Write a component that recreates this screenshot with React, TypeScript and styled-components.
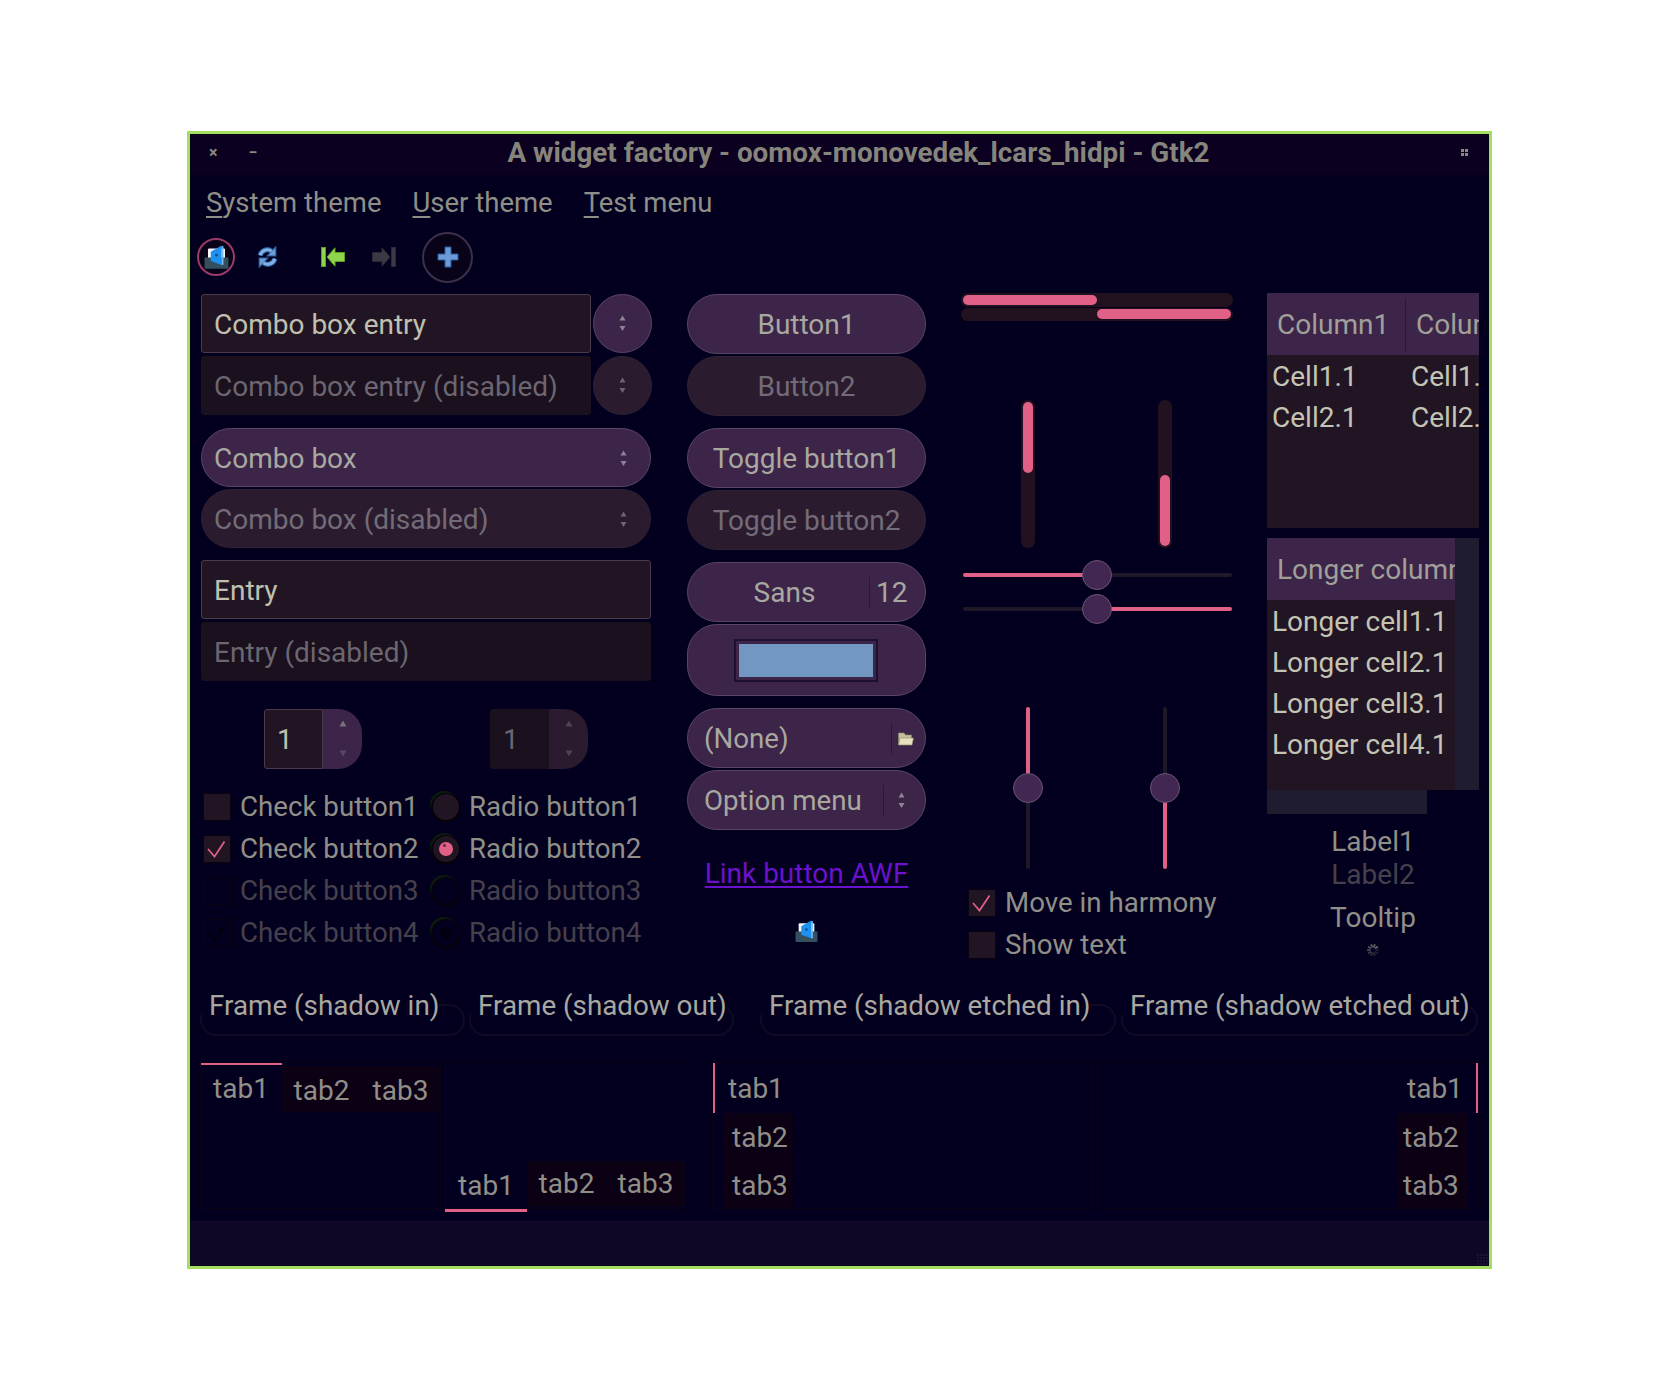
import React from 'react';
import styled, { createGlobalStyle, css } from 'styled-components';

const GlobalStyle = createGlobalStyle`
  html, body {
    margin: 0;
    background: #ffffff;
  }
  body {
    font-family: Roboto, "Liberation Sans", sans-serif;
    font-size: 28px;
    color: #a8a8a0;
  }
  * {
    box-sizing: border-box;
  }
`;

const pink = '#e06088';
const buttonBg = '#3c2549';
const buttonBorder = '#5a4565';
const buttonOff = '#2a1c2e';
const entryBg = '#211524';
const entryOff = '#1a101e';

const Page = styled.div`
  padding: 131px 0 0 187px;
`;

const Window = styled.div`
  width: 1305px;
  height: 1138px;
  border: 3px solid #a4e060;
  background: #03001f;
  display: flex;
  flex-direction: column;
`;

const TitleBar = styled.div`
  height: 41px;
  flex: none;
  background: #0b0020;
  display: flex;
  align-items: center;
  padding: 0 20px 4px 0;
`;

const WindowControls = styled.div`
  width: 66px;
  flex: none;
  display: flex;
  padding-left: 19px;
  gap: 31px;
  color: #8a8a80;
  font-size: 16px;
  font-weight: 700;
`;

const Title = styled.div`
  flex: 1;
  text-align: center;
  font-weight: 700;
  font-size: 27.8px;
  color: #85857c;
  white-space: nowrap;
`;

const MenuBar = styled.div`
  height: 57px;
  flex: none;
  display: flex;
  align-items: center;
  padding: 0 0 2px 16px;
  gap: 31px;
  font-size: 27.5px;
  color: #8f8f87;
  u {
    text-underline-offset: 4px;
    text-decoration-thickness: 2px;
  }
`;

const ToolBar = styled.div`
  height: 50px;
  flex: none;
  display: flex;
  align-items: center;
  padding-left: 7px;
`;

const ToolCircle = styled.div<{ $size: number; $ring: string; $ml?: number }>`
  width: ${p => p.$size}px;
  height: ${p => p.$size}px;
  margin-left: ${p => p.$ml ?? 0}px;
  border-radius: 50%;
  border: 2px solid ${p => p.$ring};
  background: #080318;
  display: flex;
  align-items: center;
  justify-content: center;
`;

const ToolIcon = styled.div<{ $ml: number }>`
  margin-left: ${p => p.$ml}px;
  display: flex;
`;

const Columns = styled.div`
  display: flex;
  flex: none;
  height: 706px;
  padding: 12px 0 0 11px;
`;

const Column = styled.div<{ $width: number; $ml?: number; $mt?: number }>`
  width: ${p => p.$width}px;
  margin-left: ${p => p.$ml ?? 0}px;
  margin-top: ${p => p.$mt ?? 0}px;
  flex: none;
  display: flex;
  flex-direction: column;
  & > * {
    flex: none;
  }
`;

const ComboRow = styled.div<{ $mt?: number }>`
  display: flex;
  gap: 2px;
  margin-top: ${p => p.$mt ?? 0}px;
`;

const EntryBox = styled.div<{ $off?: boolean; $mt?: number; $width?: number }>`
  height: 59px;
  width: ${p => (p.$width ? `${p.$width}px` : '100%')};
  margin-top: ${p => p.$mt ?? 0}px;
  flex: none;
  display: flex;
  align-items: center;
  padding: 2px 0 0 12px;
  border-radius: 3px;
  border: 1px solid ${p => (p.$off ? entryOff : '#4a3a4c')};
  background: ${p => (p.$off ? entryOff : entryBg)};
  color: ${p => (p.$off ? '#6c6670' : '#c0c0b0')};
`;

const pill = css<{ $off?: boolean }>`
  height: 59px;
  border-radius: 30px;
  border: 1px solid ${p => (p.$off ? '#2f2233' : buttonBorder)};
  background: ${p => (p.$off ? buttonOff : buttonBg)};
  color: ${p => (p.$off ? '#736c78' : '#a8a8a0')};
  display: flex;
  align-items: center;
`;

const RoundButton = styled.div<{ $off?: boolean }>`
  ${pill}
  width: 59px;
  flex: none;
  justify-content: center;
`;

const ComboBox = styled.div<{ $off?: boolean; $mt?: number }>`
  ${pill}
  margin-top: ${p => p.$mt ?? 0}px;
  justify-content: space-between;
  padding: 2px 23px 0 12px;
`;

const SpinRow = styled.div`
  display: flex;
  gap: 128px;
  margin-top: 28px;
  padding-left: 63px;
`;

const Spin = styled.div<{ $off?: boolean }>`
  width: 98px;
  height: 60px;
  display: flex;
  color: ${p => (p.$off ? '#6c6670' : '#c0c0b0')};
`;

const SpinValue = styled.div<{ $off?: boolean }>`
  width: 59px;
  display: flex;
  align-items: center;
  padding-left: 12px;
  border-radius: 3px 0 0 3px;
  border: 1px solid ${p => (p.$off ? entryOff : '#4a3a4c')};
  background: ${p => (p.$off ? entryOff : entryBg)};
`;

const SpinButtons = styled.div<{ $off?: boolean }>`
  width: 39px;
  display: flex;
  flex-direction: column;
  align-items: center;
  justify-content: space-between;
  padding: 11px 0 12px;
  border-radius: 0 24px 24px 0;
  background: ${p => (p.$off ? buttonOff : buttonBg)};
`;

const ToggleGrid = styled.div`
  display: grid;
  grid-template-columns: 227px 1fr;
  grid-auto-rows: 27px;
  row-gap: 15px;
  margin-top: 24px;
  padding-left: 2px;
`;

const ToggleRow = styled.div<{ $off?: boolean; $mt?: number; $pl?: number }>`
  display: flex;
  align-items: center;
  height: 27px;
  line-height: 1;
  font-size: 27.7px;
  white-space: nowrap;
  margin-top: ${p => p.$mt ?? 0}px;
  padding-left: ${p => p.$pl ?? 0}px;
  color: ${p => (p.$off ? '#46404c' : '#908f88')};
`;

const CheckBox = styled.div<{ $off?: boolean }>`
  width: 28px;
  height: 28px;
  flex: none;
  margin-right: 9px;
  border: 1px solid #0a0410;
  background: ${p => (p.$off ? 'transparent' : entryBg)};
  display: flex;
`;

const RadioDot = styled.div<{ $off?: boolean }>`
  width: 26px;
  height: 26px;
  flex: none;
  margin-right: 10px;
  border-radius: 50%;
  background: ${p => (p.$off ? 'transparent' : entryBg)};
  box-shadow: 0 1px 0 2px #06020c, -2px -2px 0 1px #0b1a0e;
  display: flex;
  align-items: center;
  justify-content: center;
`;

const RadioMark = styled.div<{ $off?: boolean }>`
  width: ${p => (p.$off ? 12 : 14)}px;
  height: ${p => (p.$off ? 12 : 14)}px;
  border-radius: 50%;
  background: ${p => (p.$off ? '#020010' : pink)};
  position: relative;
  &::after {
    content: '';
    position: absolute;
    left: 4px;
    top: 2px;
    width: 3px;
    height: 3px;
    border-radius: 50%;
    background: ${p => (p.$off ? 'transparent' : '#5a2a48')};
  }
`;

const PushButton = styled.div<{ $off?: boolean; $mt?: number; $h?: number }>`
  ${pill}
  height: ${p => p.$h ?? 60}px;
  margin-top: ${p => p.$mt ?? 0}px;
  justify-content: center;
  padding-top: 1px;
`;

const FontName = styled.div`
  flex: 1;
  text-align: center;
  padding-left: 12px;
`;

const Divider = styled.div<{ $color?: string; $h?: number }>`
  width: 1px;
  height: ${p => p.$h ?? 31}px;
  flex: none;
  background: ${p => p.$color ?? '#2a1834'};
`;

const FontSize = styled.div`
  width: 55px;
  padding-left: 6px;
`;

const ColorSwatch = styled.div`
  width: 144px;
  height: 43px;
  margin-right: 2px;
  border: 2px solid #1e1030;
  padding: 3px;
  display: flex;
`;

const ColorFill = styled.div`
  flex: 1;
  background: #7297c0;
`;

const PickerButton = styled(PushButton)`
  justify-content: flex-start;
  padding-left: 16px;
`;

const PickerLabel = styled.div`
  flex: 1;
  font-size: 27.7px;
`;

const PickerEnd = styled.div<{ $width: number }>`
  width: ${p => p.$width}px;
  flex: none;
  display: flex;
  justify-content: center;
  padding-right: 6px;
`;

const LinkButton = styled.a`
  margin-top: 27px;
  height: 34px;
  line-height: 34px;
  text-align: center;
  color: #6a12cc;
  text-decoration: underline;
  text-underline-offset: 3px;
  text-decoration-thickness: 2px;
`;

const CenteredIcon = styled.div`
  margin-top: 29px;
  display: flex;
  justify-content: center;
`;

const ProgressH = styled.div<{ $end?: boolean; $mt?: number }>`
  height: ${p => (p.$end ? 13 : 14)}px;
  margin-top: ${p => p.$mt ?? 0}px;
  padding: ${p => (p.$end ? '1px 2px 2px' : '2px')};
  border-radius: 7px;
  background: #22121f;
  display: flex;
  justify-content: ${p => (p.$end ? 'flex-end' : 'flex-start')};
`;

const ProgressFillH = styled.div<{ $value: number }>`
  width: ${p => p.$value}%;
  height: 100%;
  border-radius: 5px;
  background: ${pink};
`;

const VBarRow = styled.div`
  display: flex;
  gap: 123px;
  margin-top: 79px;
  padding-left: 60px;
`;

const ProgressV = styled.div<{ $end?: boolean }>`
  width: 14px;
  height: 148px;
  padding: 2px;
  border-radius: 7px;
  background: #22121f;
  display: flex;
  flex-direction: column;
  justify-content: ${p => (p.$end ? 'flex-end' : 'flex-start')};
`;

const ProgressFillV = styled.div<{ $value: number }>`
  height: ${p => p.$value}%;
  border-radius: 5px;
  background: ${pink};
`;

const ScaleH = styled.div<{ $mt: number }>`
  height: 30px;
  margin-top: ${p => p.$mt}px;
  padding: 0 1px 0 2px;
  position: relative;
  display: flex;
  align-items: center;
`;

const Track = styled.div<{ $on?: boolean; $vertical?: boolean }>`
  background: ${p => (p.$on ? pink : '#1e1828')};
  border-radius: 2px;
  ${p => (p.$vertical ? 'width: 4px;' : 'height: 4px;')}
  flex: 1;
`;

const Thumb = styled.div`
  position: absolute;
  width: 30px;
  height: 30px;
  border-radius: 50%;
  background: #432753;
  border: 1px solid #6a5570;
  left: 121px;
  top: 0;
`;

const VScaleRow = styled.div`
  display: flex;
  gap: 107px;
  margin-top: 83px;
  padding-left: 52px;
`;

const ScaleV = styled.div`
  width: 30px;
  height: 162px;
  position: relative;
  display: flex;
  flex-direction: column;
  align-items: center;
`;

const VThumb = styled(Thumb)`
  left: 0;
  top: 66px;
`;

const Tree = styled.div`
  height: 235px;
  background: ${entryBg};
  overflow: hidden;
`;

const TreeHeader = styled.div`
  height: 62px;
  padding-top: 1px;
  background: ${buttonBg};
  color: #a0a09a;
  display: flex;
  align-items: center;
  white-space: nowrap;
  overflow: hidden;
`;

const HeaderCell = styled.div<{ $width: number }>`
  width: ${p => p.$width}px;
  flex: none;
  padding-left: 10px;
`;

const TreeRow = styled.div`
  height: 41px;
  display: flex;
  align-items: center;
  color: #c4c4b4;
  white-space: nowrap;
`;

const TreeCell = styled.div<{ $width: number }>`
  width: ${p => p.$width}px;
  flex: none;
  padding-left: 5px;
`;

const TreeRows = styled.div`
  padding-top: 1px;
`;

const ScrolledTree = styled.div`
  margin-top: 10px;
  display: grid;
  grid-template-columns: 188px 24px;
  grid-template-rows: 252px 24px;
`;

const ScrolledBody = styled.div`
  background: ${entryBg};
  overflow: hidden;
`;

const VScroll = styled.div`
  background: #201c30;
`;

const HScroll = styled.div`
  width: 160px;
  background: #201c30;
`;

const Caption = styled.div<{ $mt?: number; $off?: boolean }>`
  height: 32px;
  line-height: 32px;
  margin-top: ${p => p.$mt ?? 0}px;
  text-align: center;
  color: ${p => (p.$off ? '#46404c' : '#908f88')};
`;

const SpinnerWrap = styled.div`
  margin-top: 9px;
  display: flex;
  justify-content: center;
`;

const FrameRow = styled.div`
  display: flex;
  padding-left: 10px;
`;

const Frame = styled.fieldset<{ $width: number; $ml?: number }>`
  width: ${p => p.$width}px;
  height: 48px;
  margin: 0 0 0 ${p => p.$ml ?? 0}px;
  padding: 0;
  min-width: 0;
  border: 2px solid #100a22;
  border-radius: 20px;
`;

const FrameLabel = styled.legend`
  padding: 2px 0 0 7px;
  margin: 0;
  font-size: 27.8px;
  color: #a8a8a0;
  line-height: 32px;
  white-space: nowrap;
`;

const NotebookRow = styled.div`
  display: flex;
  padding-left: 10px;
  margin-top: 26px;
`;

const Notebook = styled.div<{ $width: number; $ml?: number; $dir: 'column' | 'column-reverse' | 'row' | 'row-reverse' }>`
  width: ${p => p.$width}px;
  height: 147px;
  margin-left: ${p => p.$ml ?? 0}px;
  flex: none;
  display: flex;
  flex-direction: ${p => p.$dir};
  outline: 1px solid #0a0216;
  outline-offset: -1px;
`;

const TabStrip = styled.div<{ $bottom?: boolean }>`
  display: flex;
  align-items: flex-end;
  margin-bottom: ${p => (p.$bottom ? -3 : 0)}px;
`;

const TabGroup = styled.div<{ $bottom?: boolean }>`
  display: flex;
  height: 46px;
  background: #0c0014;
  align-items: center;
  margin-bottom: ${p => (p.$bottom ? 5 : 0)}px;
  padding: ${p => (p.$bottom ? '0 0 2px' : '3px 0 0')};
`;

const ActiveTab = styled.div<{ $bottom?: boolean }>`
  width: 82px;
  height: 50px;
  display: flex;
  align-items: center;
  justify-content: center;
  color: #908f88;
  ${p => (p.$bottom ? `border-bottom: 3px solid ${pink};` : `border-top: 3px solid ${pink};`)}
`;

const Tab = styled.div`
  width: 79px;
  text-align: center;
  color: #908f88;
`;

const SideStrip = styled.div<{ $right?: boolean }>`
  display: flex;
  flex-direction: column;
  flex: none;
  width: 81px;
  align-items: ${p => (p.$right ? 'flex-start' : 'flex-end')};
`;

const SideActive = styled.div<{ $right?: boolean }>`
  width: 100%;
  height: 51px;
  display: flex;
  align-items: center;
  padding-top: 2px;
  color: #908f88;
  ${p =>
    p.$right
      ? `border-right: 3px solid ${pink}; padding-left: 9px;`
      : `border-left: 3px solid ${pink}; padding-left: 13px;`}
`;

const SideGroup = styled.div<{ $right?: boolean }>`
  flex: 1;
  width: 70px;
  background: #0c0014;
  display: flex;
  flex-direction: column;
  color: #908f88;
  padding-left: ${p => (p.$right ? 5 : 9)}px;
`;

const SideTab = styled.div`
  height: 48px;
  display: flex;
  align-items: center;
`;

const StatusBar = styled.div`
  margin-top: auto;
  height: 45px;
  flex: none;
  background: #0e0826;
  border-top: 1px solid #150b28;
  display: flex;
  justify-content: flex-end;
  align-items: flex-end;
`;

// drawings

const UpDown = ({ color = '#8a8590' }: { color?: string }) => (
  <svg width="7" height="17" viewBox="0 0 7 17">
    <path d="M3.5 0.5 L6.5 5.5 H0.5 Z" fill={color} />
    <path d="M3.5 16 L6.5 11 H0.5 Z" fill={color} />
  </svg>
);

const SmallArrow = ({ down, color }: { down?: boolean; color: string }) => (
  <svg width="8" height="7" viewBox="0 0 8 7">
    <path d={down ? 'M4 6.5 L7.5 0.5 H0.5 Z' : 'M4 0.5 L7.5 6.5 H0.5 Z'} fill={color} />
  </svg>
);

const CheckMark = ({ color }: { color: string }) => (
  <svg width="26" height="26" viewBox="0 0 26 26">
    <path d="M4 13 L10.5 20.5 L20.5 5.5" fill="none" stroke={color} strokeWidth="1.7" />
  </svg>
);

const AppIcon = ({ size = 23 }: { size?: number }) => (
  <svg width={size} height={size} viewBox="0 0 22 22">
    <rect x="3.5" y="3" width="15" height="12" rx="1" fill="#f4f6f8" />
    <path d="M0.5 11 H21.5 V20 Q21.5 21 20.5 21 H1.5 Q0.5 21 0.5 20 Z" fill="#34505f" />
    <path d="M6 6 L15.5 0.5 V17.5 L6 14 Z" fill="#1e90f0" />
    <rect x="15.5" y="1" width="1.6" height="16.5" fill="#7abcf0" />
    <circle cx="11" cy="9" r="1.2" fill="#12508a" />
  </svg>
);

const RefreshIcon = () => (
  <svg width="21" height="22" viewBox="0 0 20 21">
    <path d="M3 9 A7 7 0 0 1 14 5" fill="none" stroke="#2a5a98" strokeWidth="5" />
    <path d="M18 0.5 V9.5 H9.5 Z" fill="#6c9ed8" stroke="#2a5a98" strokeWidth="1" />
    <path d="M3 9 A7 7 0 0 1 14 5" fill="none" stroke="#7fb0e6" strokeWidth="3" />
    <path d="M17 12 A7 7 0 0 1 6 16" fill="none" stroke="#2a5a98" strokeWidth="5" />
    <path d="M2 20.5 V11.5 H10.5 Z" fill="#6c9ed8" stroke="#2a5a98" strokeWidth="1" />
    <path d="M17 12 A7 7 0 0 1 6 16" fill="none" stroke="#7fb0e6" strokeWidth="3" />
  </svg>
);

const JumpIcon = ({ fill, stroke, flip }: { fill: string; stroke: string; flip?: boolean }) => (
  <svg width="24" height="20" viewBox="0 0 24 20" style={flip ? { transform: 'scaleX(-1)' } : undefined}>
    <rect x="0.5" y="0.5" width="4" height="19" fill={fill} stroke={stroke} />
    <path d="M6 10 L14 0.8 V5.5 H23.5 V14.5 H14 V19.2 Z" fill={fill} stroke={stroke} />
  </svg>
);

const PlusIcon = () => (
  <svg width="22" height="22" viewBox="0 0 22 22">
    <path
      d="M8 1 H14 V8 H21 V14 H14 V21 H8 V14 H1 V8 H8 Z"
      fill="#6a9bd8"
      stroke="#2a5a9a"
      strokeWidth="1"
    />
  </svg>
);

const FolderIcon = () => (
  <svg width="16" height="14" viewBox="0 0 16 14">
    <path d="M0.5 1 H6 L7.5 3 H13.5 V12.5 H0.5 Z" fill="#c4c09c" stroke="#8a8668" strokeWidth="0.6" />
    <path d="M2 6 H15.5 L14 13 H0.5 Z" fill="#e6e2c0" stroke="#8a8668" strokeWidth="0.6" />
  </svg>
);

const Dots = ({ color, step, rows }: { color: string; step: number; rows: number }) => (
  <svg width={step * rows} height={step * rows} viewBox={`0 0 ${step * rows} ${step * rows}`}>
    {Array.from({ length: rows * rows }, (_, i) => (
      <rect
        key={i}
        x={(i % rows) * step}
        y={Math.floor(i / rows) * step}
        width={step - 1}
        height={step - 1}
        fill={color}
      />
    ))}
  </svg>
);

const SpinnerIcon = () => (
  <svg width="14" height="14" viewBox="0 0 14 14">
    {Array.from({ length: 10 }, (_, i) => {
      const a = (i / 10) * Math.PI * 2;
      return (
        <line
          key={i}
          x1={7 + Math.cos(a) * 2.5}
          y1={7 + Math.sin(a) * 2.5}
          x2={7 + Math.cos(a) * 6}
          y2={7 + Math.sin(a) * 6}
          stroke="#6c6a6c"
          strokeOpacity={0.2 + (i / 10) * 0.8}
          strokeWidth="2"
        />
      );
    })}
  </svg>
);

const checks = [
  { check: 'Check button1', radio: 'Radio button1' },
  { check: 'Check button2', radio: 'Radio button2', on: true },
  { check: 'Check button3', radio: 'Radio button3', off: true },
  { check: 'Check button4', radio: 'Radio button4', on: true, off: true },
];

const frames = [
  { label: 'Frame (shadow in)', width: 265, ml: 0 },
  { label: 'Frame (shadow out)', width: 265, ml: 4 },
  { label: 'Frame (shadow etched in)', width: 356, ml: 26 },
  { label: 'Frame (shadow etched out)', width: 357, ml: 5 },
];

const App: React.FC = () => {
  return (
    <Page>
      <GlobalStyle />
      <Window>
        <TitleBar>
          <WindowControls>
            <span>×</span>
            <span>−</span>
          </WindowControls>
          <Title>A widget factory - oomox-monovedek_lcars_hidpi - Gtk2</Title>
          <Dots color="#8a8a80" step={4} rows={2} />
        </TitleBar>

        <MenuBar>
          <span><u>S</u>ystem theme</span>
          <span><u>U</u>ser theme</span>
          <span><u>T</u>est menu</span>
        </MenuBar>

        <ToolBar>
          <ToolCircle $size={38} $ring="#9a3a66"><AppIcon size={25} /></ToolCircle>
          <ToolIcon $ml={22}><RefreshIcon /></ToolIcon>
          <ToolIcon $ml={43}><JumpIcon fill="#8fd44a" stroke="#5ea01e" /></ToolIcon>
          <ToolIcon $ml={27}><JumpIcon fill="#3c3844" stroke="#2c2834" flip /></ToolIcon>
          <ToolCircle $size={51} $ring="#3c2f48" $ml={26}><PlusIcon /></ToolCircle>
        </ToolBar>

        <Columns>
          <Column $width={450}>
            <ComboRow>
              <EntryBox $width={390}>Combo box entry</EntryBox>
              <RoundButton><UpDown /></RoundButton>
            </ComboRow>
            <ComboRow $mt={3}>
              <EntryBox $width={390} $off>Combo box entry (disabled)</EntryBox>
              <RoundButton $off><UpDown color="#6c6670" /></RoundButton>
            </ComboRow>
            <ComboBox $mt={13}>Combo box<UpDown /></ComboBox>
            <ComboBox $off $mt={2}>Combo box (disabled)<UpDown color="#6c6670" /></ComboBox>
            <EntryBox $mt={12}>Entry</EntryBox>
            <EntryBox $off $mt={3}>Entry (disabled)</EntryBox>
            <SpinRow>
              <Spin>
                <SpinValue>1</SpinValue>
                <SpinButtons>
                  <SmallArrow color="#7a7078" />
                  <SmallArrow down color="#564a60" />
                </SpinButtons>
              </Spin>
              <Spin $off>
                <SpinValue $off>1</SpinValue>
                <SpinButtons $off>
                  <SmallArrow color="#4c4450" />
                  <SmallArrow down color="#4c4450" />
                </SpinButtons>
              </Spin>
            </SpinRow>
            <ToggleGrid>
              {checks.map(row => (
                <React.Fragment key={row.check}>
                  <ToggleRow $off={row.off}>
                    <CheckBox $off={row.off}>
                      {row.on && <CheckMark color={row.off ? '#000008' : pink} />}
                    </CheckBox>
                    {row.check}
                  </ToggleRow>
                  <ToggleRow $off={row.off} $pl={3}>
                    <RadioDot $off={row.off}>
                      {row.on && <RadioMark $off={row.off} />}
                    </RadioDot>
                    {row.radio}
                  </ToggleRow>
                </React.Fragment>
              ))}
            </ToggleGrid>
          </Column>

          <Column $width={239} $ml={36}>
            <PushButton>Button1</PushButton>
            <PushButton $off $mt={2}>Button2</PushButton>
            <PushButton $mt={12}>Toggle button1</PushButton>
            <PushButton $off $mt={2}>Toggle button2</PushButton>
            <PushButton $mt={12}>
              <FontName>Sans</FontName>
              <Divider />
              <FontSize>12</FontSize>
            </PushButton>
            <PushButton $mt={2} $h={72}>
              <ColorSwatch><ColorFill /></ColorSwatch>
            </PushButton>
            <PickerButton $mt={12}>
              <PickerLabel>(None)</PickerLabel>
              <Divider />
              <PickerEnd $width={33}><FolderIcon /></PickerEnd>
            </PickerButton>
            <PickerButton $mt={2}>
              <PickerLabel>Option menu</PickerLabel>
              <Divider />
              <PickerEnd $width={41}><UpDown /></PickerEnd>
            </PickerButton>
            <LinkButton>Link button AWF</LinkButton>
            <CenteredIcon><AppIcon /></CenteredIcon>
          </Column>

          <Column $width={272} $ml={35} $mt={-1}>
            <ProgressH><ProgressFillH $value={50} /></ProgressH>
            <ProgressH $end $mt={1}><ProgressFillH $value={50} /></ProgressH>
            <VBarRow>
              <ProgressV><ProgressFillV $value={49} /></ProgressV>
              <ProgressV $end><ProgressFillV $value={49} /></ProgressV>
            </VBarRow>
            <ScaleH $mt={12}>
              <Track $on />
              <Track />
              <Thumb />
            </ScaleH>
            <ScaleH $mt={4}>
              <Track />
              <Track $on />
              <Thumb />
            </ScaleH>
            <VScaleRow>
              <ScaleV>
                <Track $vertical $on />
                <Track $vertical />
                <VThumb />
              </ScaleV>
              <ScaleV>
                <Track $vertical />
                <Track $vertical $on />
                <VThumb />
              </ScaleV>
            </VScaleRow>
            <ToggleRow $mt={20} $pl={7}>
              <CheckBox><CheckMark color={pink} /></CheckBox>
              Move in harmony
            </ToggleRow>
            <ToggleRow $mt={15} $pl={7}>
              <CheckBox />
              Show text
            </ToggleRow>
          </Column>

          <Column $width={212} $ml={34} $mt={-1}>
            <Tree>
              <TreeHeader>
                <HeaderCell $width={138}>Column1</HeaderCell>
                <Divider $h={54} />
                <HeaderCell $width={73}>Column2</HeaderCell>
              </TreeHeader>
              <TreeRows>
                <TreeRow>
                  <TreeCell $width={139}>Cell1.1</TreeCell>
                  <TreeCell $width={73}>Cell1.2</TreeCell>
                </TreeRow>
                <TreeRow>
                  <TreeCell $width={139}>Cell2.1</TreeCell>
                  <TreeCell $width={73}>Cell2.2</TreeCell>
                </TreeRow>
              </TreeRows>
            </Tree>
            <ScrolledTree>
              <ScrolledBody>
                <TreeHeader>
                  <HeaderCell $width={188}>Longer column</HeaderCell>
                </TreeHeader>
                <TreeRows>
                  {['Longer cell1.1', 'Longer cell2.1', 'Longer cell3.1', 'Longer cell4.1'].map(cell => (
                    <TreeRow key={cell}>
                      <TreeCell $width={188}>{cell}</TreeCell>
                    </TreeRow>
                  ))}
                </TreeRows>
              </ScrolledBody>
              <VScroll />
              <HScroll />
            </ScrolledTree>
            <Caption $mt={12}>Label1</Caption>
            <Caption $off $mt={1}>Label2</Caption>
            <Caption $mt={11}>Tooltip</Caption>
            <SpinnerWrap><SpinnerIcon /></SpinnerWrap>
          </Column>
        </Columns>

        <FrameRow>
          {frames.map(frame => (
            <Frame key={frame.label} $width={frame.width} $ml={frame.ml}>
              <FrameLabel>{frame.label}</FrameLabel>
            </Frame>
          ))}
        </FrameRow>

        <NotebookRow>
          <Notebook $width={241} $dir="column">
            <TabStrip>
              <ActiveTab>tab1</ActiveTab>
              <TabGroup>
                <Tab>tab2</Tab>
                <Tab>tab3</Tab>
              </TabGroup>
            </TabStrip>
          </Notebook>
          <Notebook $width={241} $ml={4} $dir="column-reverse">
            <TabStrip $bottom>
              <ActiveTab $bottom>tab1</ActiveTab>
              <TabGroup $bottom>
                <Tab>tab2</Tab>
                <Tab>tab3</Tab>
              </TabGroup>
            </TabStrip>
          </Notebook>
          <Notebook $width={381} $ml={26} $dir="row">
            <SideStrip>
              <SideActive>tab1</SideActive>
              <SideGroup>
                <SideTab>tab2</SideTab>
                <SideTab>tab3</SideTab>
              </SideGroup>
            </SideStrip>
          </Notebook>
          <Notebook $width={382} $ml={4} $dir="row-reverse">
            <SideStrip $right>
              <SideActive $right>tab1</SideActive>
              <SideGroup $right>
                <SideTab>tab2</SideTab>
                <SideTab>tab3</SideTab>
              </SideGroup>
            </SideStrip>
          </Notebook>
        </NotebookRow>

        <StatusBar>
          <Dots color="#1a1430" step={3} rows={4} />
        </StatusBar>
      </Window>
    </Page>
  );
};

export default App;
